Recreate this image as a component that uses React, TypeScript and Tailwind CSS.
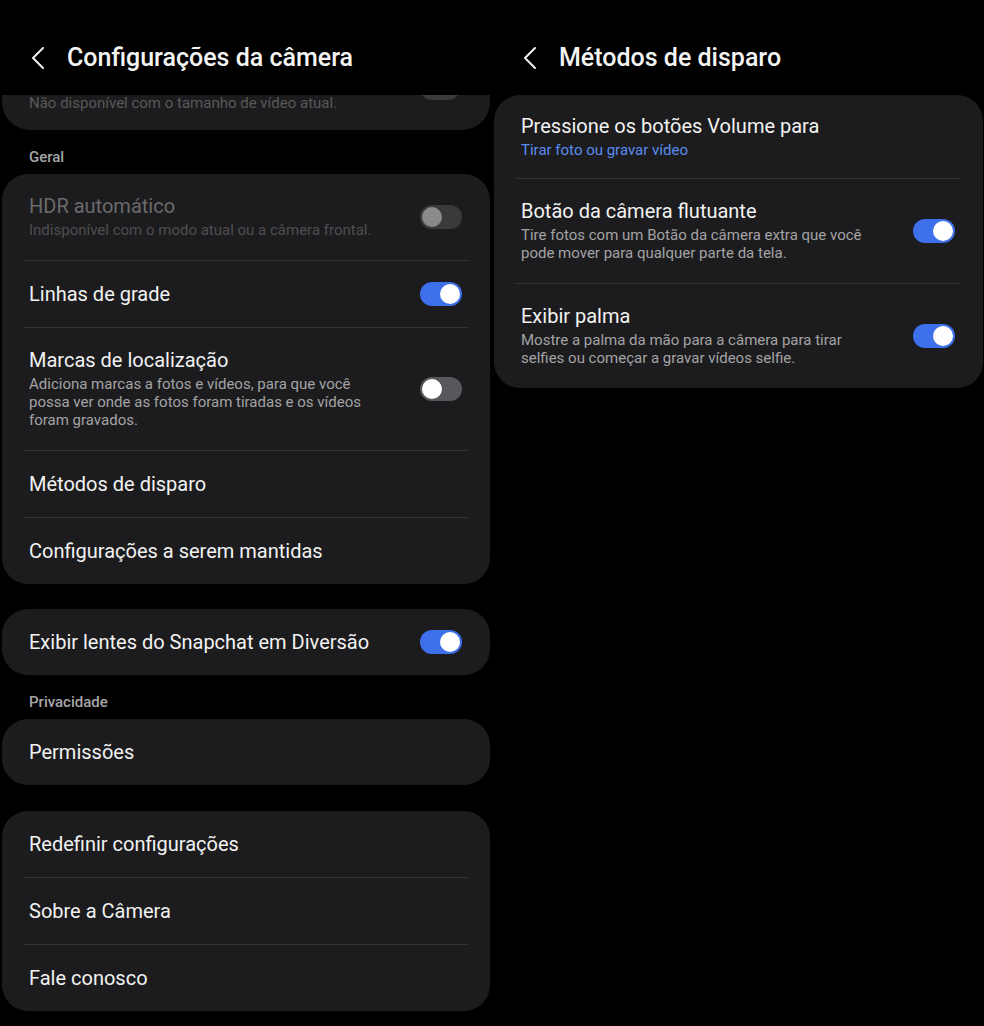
import React from "react";

type ToggleState = "on" | "off" | "disabled";

function Toggle({ state }: { state: ToggleState }) {
  if (state === "on") {
    return (
      <div className="flex h-[24px] w-[42px] shrink-0 items-center justify-end rounded-full bg-[#3e70ec] px-[2px]">
        <div className="h-[20px] w-[20px] rounded-full bg-white" />
      </div>
    );
  }
  if (state === "off") {
    return (
      <div className="flex h-[24px] w-[42px] shrink-0 items-center justify-start rounded-full bg-[#58585c] px-[2px]">
        <div className="h-[20px] w-[20px] rounded-full bg-white" />
      </div>
    );
  }
  return (
    <div className="flex h-[24px] w-[42px] shrink-0 items-center justify-start rounded-full bg-[#3a3a3d] px-[2px]">
      <div className="h-[20px] w-[20px] rounded-full bg-[#8a8a8c]" />
    </div>
  );
}

function Chevron() {
  return (
    <svg width="14" height="24" viewBox="0 0 14 24" fill="none" className="shrink-0">
      <path d="M12 2 L2 12 L12 22" stroke="#f2f2f2" strokeWidth="2" strokeLinecap="round" strokeLinejoin="round" />
    </svg>
  );
}

function Header({ title }: { title: string }) {
  return (
    <div className="flex h-[95px] items-start gap-[22px] pl-[31px] pt-[46px]">
      <Chevron />
      <div className="-mt-[3px] text-[25px] font-medium leading-[30px] text-[#f4f4f4]">{title}</div>
    </div>
  );
}

type RowProps = {
  title: string;
  sub?: string;
  disabled?: boolean;
  toggle?: ToggleState;
};

function Row({ title, sub, disabled, toggle }: RowProps) {
  const titleColor = disabled ? "text-[#6a6a6c]" : "text-[#f2f2f2]";
  const subColor = disabled ? "text-[#4e4e50]" : "text-[#a3a3a5]";
  return (
    <div className={`flex items-center justify-between gap-[36px] pl-[27px] pr-[28px] ${sub ? "pt-[20px] pb-[21px]" : "py-[21px]"}`}>
      <div className="min-w-0">
        <div className={`text-[20px] leading-[24px] ${titleColor}`}>{title}</div>
        {sub && <div className={`mt-[3px] text-[15px] leading-[18px] ${subColor}`}>{sub}</div>}
      </div>
      {toggle && <Toggle state={toggle} />}
    </div>
  );
}

function Divider() {
  return <div className="mx-[22px] h-px bg-[#343436]" />;
}

function Card({ children, className = "" }: { children: React.ReactNode; className?: string }) {
  return <div className={`rounded-[26px] bg-[#1c1c1e] ${className}`}>{children}</div>;
}

function Label({ text }: { text: string }) {
  return <div className="pl-[29px] pt-[17px] pb-[7px] text-[15px] font-medium leading-[20px] text-[#a6a6a8]">{text}</div>;
}

export default function App() {
  return (
    <div className="flex h-[1026px] w-[984px] bg-black font-['Roboto','Liberation_Sans',sans-serif]">
      {/* Left screen */}
      <div className="w-[492px] shrink-0">
        <Header title="Configurações da câmera" />
        <div className="mx-[2px] h-[35px] overflow-hidden rounded-b-[28px] bg-[#1c1c1e]">
          <div className="flex items-start justify-between pl-[27px] pr-[30px]">
            <div className="text-[15px] leading-[16px] text-[#58585a]">Não disponível com o tamanho de vídeo atual.</div>
            <div className="-mt-[19px] h-[24px] w-[40px] rounded-full bg-[#3a3a3d]" />
          </div>
        </div>

        <Label text="Geral" />
        <Card className="mx-[2px]">
          <Row title="HDR automático" sub="Indisponível com o modo atual ou a câmera frontal." disabled toggle="disabled" />
          <Divider />
          <Row title="Linhas de grade" toggle="on" />
          <Divider />
          <Row
            title="Marcas de localização"
            sub="Adiciona marcas a fotos e vídeos, para que você possa ver onde as fotos foram tiradas e os vídeos foram gravados."
            toggle="off"
          />
          <Divider />
          <Row title="Métodos de disparo" />
          <Divider />
          <Row title="Configurações a serem mantidas" />
        </Card>

        <Card className="mx-[2px] mt-[25px]">
          <Row title="Exibir lentes do Snapchat em Diversão" toggle="on" />
        </Card>

        <Label text="Privacidade" />
        <Card className="mx-[2px]">
          <Row title="Permissões" />
        </Card>

        <Card className="mx-[2px] mt-[26px]">
          <Row title="Redefinir configurações" />
          <Divider />
          <Row title="Sobre a Câmera" />
          <Divider />
          <Row title="Fale conosco" />
        </Card>
      </div>

      {/* Right screen */}
      <div className="w-[492px] shrink-0">
        <Header title="Métodos de disparo" />
        <Card className="ml-[2px] mr-[1px] pt-[1px]">
          <div className="pl-[27px] pr-[28px] pt-[18px] pb-[19px]">
            <div className="text-[20px] leading-[24px] text-[#f2f2f2]">Pressione os botões Volume para</div>
            <div className="mt-[3px] text-[15px] leading-[18px] text-[#5a8bf0]">Tirar foto ou gravar vídeo</div>
          </div>
          <Divider />
          <Row
            title="Botão da câmera flutuante"
            sub="Tire fotos com um Botão da câmera extra que você pode mover para qualquer parte da tela."
            toggle="on"
          />
          <Divider />
          <Row
            title="Exibir palma"
            sub="Mostre a palma da mão para a câmera para tirar selfies ou começar a gravar vídeos selfie."
            toggle="on"
          />
        </Card>
      </div>
    </div>
  );
}
